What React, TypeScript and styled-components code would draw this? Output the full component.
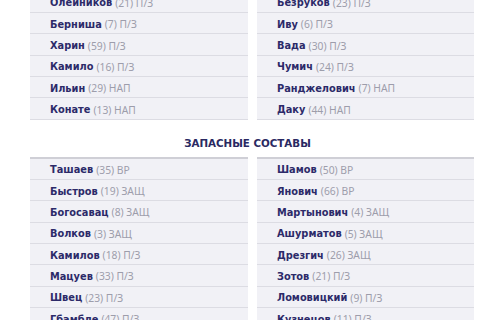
import React from "react";
import styled, { createGlobalStyle } from "styled-components";

const Global = createGlobalStyle`
  html, body { margin: 0; padding: 0; background: #ffffff; overflow: hidden; }
  body { font-family: "Noto Sans", "Open Sans", sans-serif; }
`;

const Page = styled.div`
  width: 500px;
  height: 320px;
  overflow: hidden;
`;

const Inner = styled.div`
  margin-top: -8.3px;
  padding: 0 26px 0 30px;
`;

const Columns = styled.div`
  display: grid;
  grid-template-columns: 218px 217px;
  column-gap: 9px;
`;

const Table = styled.div<{ $top?: boolean }>`
  display: flex;
  flex-direction: column;
  border-top: ${(p) => (p.$top ? "2px solid #cfcfd6" : "none")};
`;

const Row = styled.div`
  box-sizing: border-box;
  height: 21.33px;
  display: flex;
  align-items: center;
  padding: 2px 0 0 20px;
  background: #f1f1f6;
  border-bottom: 1px solid #dcdce3;
  font-size: 10px;
  white-space: nowrap;
`;

const Name = styled.span`
  font-family: "DejaVu Sans", "Noto Sans", sans-serif;
  font-size: 9.8px;
  font-weight: 700;
  color: #2c2a69;
`;

const Info = styled.span`
  font-size: 10.3px;
  color: #9d9dab;
  margin-left: 3px;
`;

const Heading = styled.h2`
  box-sizing: border-box;
  margin: 0;
  height: 37px;
  padding: 10px 9px 0 0;
  display: flex;
  align-items: center;
  justify-content: center;
  font-family: "DejaVu Sans", "Noto Sans", sans-serif;
  font-size: 10.3px;
  font-weight: 700;
  color: #2a2962;
`;

type P = [string, string];

const topLeft: P[] = [
  ["Олейников", "(21) П/З"],
  ["Берниша", "(7) П/З"],
  ["Харин", "(59) П/З"],
  ["Камило", "(16) П/З"],
  ["Ильин", "(29) НАП"],
  ["Конате", "(13) НАП"],
];
const topRight: P[] = [
  ["Безруков", "(23) П/З"],
  ["Иву", "(6) П/З"],
  ["Вада", "(30) П/З"],
  ["Чумич", "(24) П/З"],
  ["Ранджелович", "(7) НАП"],
  ["Даку", "(44) НАП"],
];
const subLeft: P[] = [
  ["Ташаев", "(35) ВР"],
  ["Быстров", "(19) ЗАЩ"],
  ["Богосавац", "(8) ЗАЩ"],
  ["Волков", "(3) ЗАЩ"],
  ["Камилов", "(18) П/З"],
  ["Мацуев", "(33) П/З"],
  ["Швец", "(23) П/З"],
  ["Гбамбле", "(47) П/З"],
];
const subRight: P[] = [
  ["Шамов", "(50) ВР"],
  ["Янович", "(66) ВР"],
  ["Мартынович", "(4) ЗАЩ"],
  ["Ашурматов", "(5) ЗАЩ"],
  ["Дрезгич", "(26) ЗАЩ"],
  ["Зотов", "(21) П/З"],
  ["Ломовицкий", "(9) П/З"],
  ["Кузнецов", "(11) П/З"],
];

const List = ({ items, top }: { items: P[]; top?: boolean }) => (
  <Table $top={top}>
    {items.map(([n, i]) => (
      <Row key={n}>
        <Name>{n}</Name>
        <Info>{i}</Info>
      </Row>
    ))}
  </Table>
);

export default function App() {
  return (
    <Page>
      <Global />
      <Inner>
        <Columns>
          <List items={topLeft} />
          <List items={topRight} />
        </Columns>
        <Heading>ЗАПАСНЫЕ СОСТАВЫ</Heading>
        <Columns>
          <List items={subLeft} top />
          <List items={subRight} top />
        </Columns>
      </Inner>
    </Page>
  );
}
